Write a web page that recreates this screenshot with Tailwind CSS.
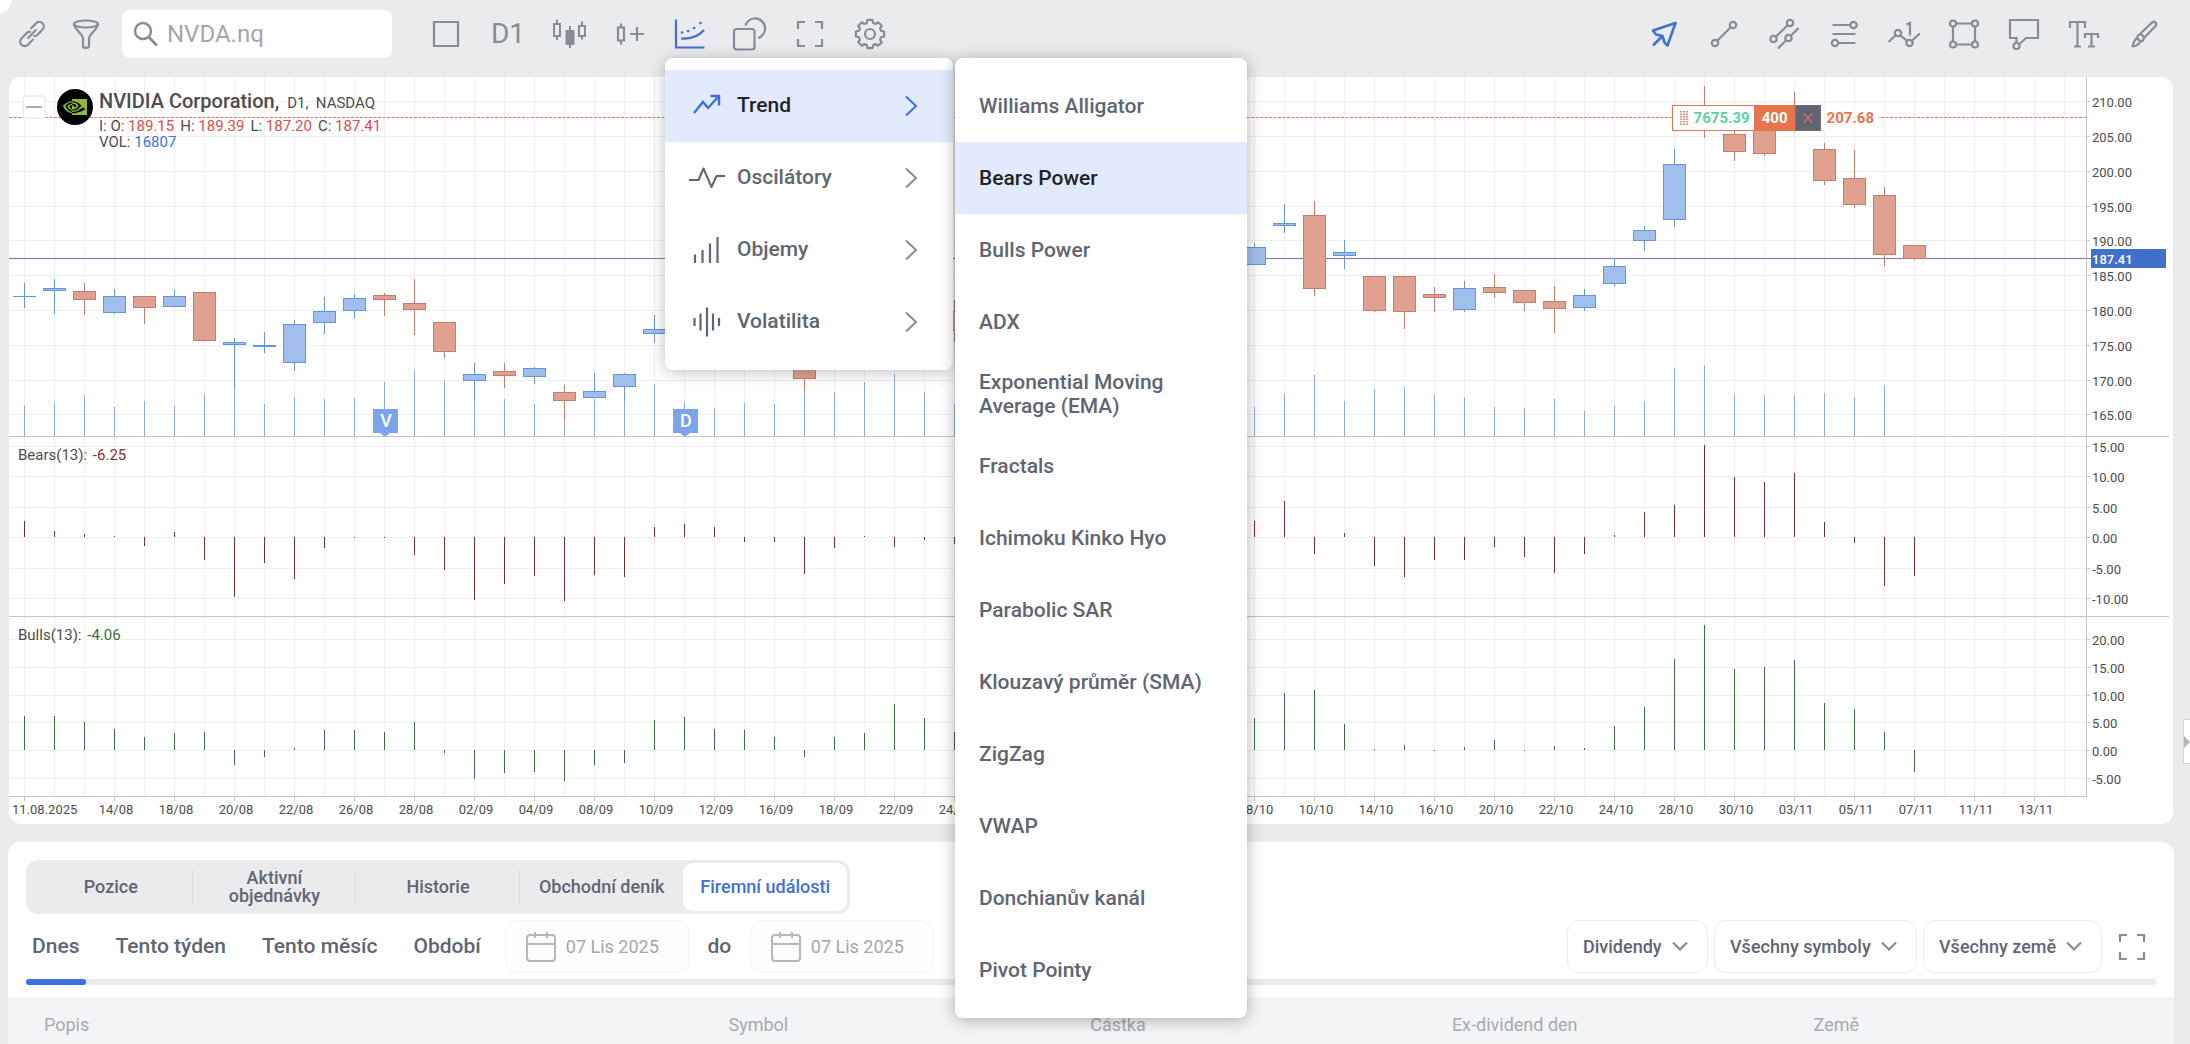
<!DOCTYPE html>
<html lang="cs">

<head>
  <meta charset="UTF-8" />
  <meta name="viewport" content="width=device-width, initial-scale=1.0" />
  <title>NVDA.nq - Obchodní platforma</title>
  <script src="https://cdn.jsdelivr.net/npm/@tailwindcss/browser@4"></script>
</head>

<body class="relative flex h-screen flex-col overflow-hidden bg-[#e9ebec] font-['Roboto',sans-serif] text-[#5f6673]">

  <div class="absolute -top-[16px] -left-[18px] size-[30px] rounded-full bg-white"></div>

  <!-- Horní lišta -->
  <header class="flex h-[77px] shrink-0 items-start justify-between pr-4 pl-[5px] text-[#868c98]">
    <div class="flex shrink-0">
      <button class="flex h-[68px] w-[54px] shrink-0 items-center justify-center" aria-label="Propojit">
        <svg class="size-9" viewBox="0 0 36 36" fill="none" stroke="currentColor" stroke-width="2.2" stroke-linecap="round">
          <g transform="rotate(-46 18 18)">
            <path d="M14.500 22.500H7.500a4.500 4.500 0 0 1 0-9h7.500a4.500 4.500 0 0 1 3 1.500M21.500 13.500h7a4.500 4.500 0 0 1 0 9h-7.500a4.500 4.500 0 0 1-3-1.500M12.500 18h11" />
          </g>
        </svg>
      </button>
      <button class="flex h-[68px] w-[54px] shrink-0 items-center justify-center" aria-label="Filtr">
        <svg class="size-9" viewBox="0 0 36 36" fill="none" stroke="currentColor" stroke-width="2.2" stroke-linejoin="round">
          <ellipse cx="18" cy="8" rx="12" ry="3.500" />
          <path d="M6 8c0 5 8 9 9 14v8.500c0 1.800 6 1.800 6 0V22c1-5 9-9 9-14" />
        </svg>
      </button>
      <label class="mt-[10px] ml-[9px] flex h-12 w-[270px] shrink-0 items-center gap-2 rounded-lg bg-white pl-[11px]">
        <svg class="size-[26px] shrink-0" viewBox="0 0 26 26" fill="none" stroke="currentColor" stroke-width="2.400">
          <circle cx="10" cy="10" r="8" />
          <path d="M15.500 16L24 24.500" stroke-width="2.800" />
        </svg>
        <input type="text" value="NVDA.nq" aria-label="Symbol" class="w-[200px] bg-transparent text-2xl text-[#a3a7b0] outline-none" />
      </label>

      <div class="ml-6 flex">
        <button class="flex h-[68px] w-[60px] shrink-0 items-center justify-center" aria-label="Rozložení">
          <svg class="size-9" viewBox="0 0 36 36" fill="none" stroke="currentColor" stroke-width="2.200">
            <path d="M6 6h24v24H6z" />
          </svg>
        </button>
        <button class="flex h-[68px] w-16 shrink-0 items-center justify-center text-[28px]">D1</button>
        <button class="flex h-[68px] w-[60px] shrink-0 items-center justify-center" aria-label="Typ grafu">
          <svg class="size-9" viewBox="0 0 36 36" fill="none" stroke="currentColor" stroke-width="2">
            <path d="M2 8h6v12H2zM5 3.500V8M5 20v4M27 10h6v10h-6zM30 5.500V10M30 20v3.500M18 10v22" />
            <path d="M14.500 15h7v13h-7z" fill="currentColor" stroke-linejoin="round" />
          </svg>
        </button>
        <button class="flex h-[68px] w-[60px] shrink-0 items-center justify-center" aria-label="Přidat svíčku">
          <svg class="size-9" viewBox="0 0 36 36" fill="none" stroke="currentColor" stroke-width="2.200">
            <path d="M6 11.500h6v13H6zM9 7.500v4M9 24.500v4M18 18h14M25 11v14" />
          </svg>
        </button>
        <div class="relative w-[60px] shrink-0">
          <button class="flex h-[68px] w-[60px] items-center justify-center text-[#3f70d9]" aria-label="Indikátory">
            <svg class="size-9" viewBox="0 0 36 36" fill="none" stroke="currentColor" stroke-width="2.200">
              <path d="M4 3.500V31.500H32.500" />
              <path d="M9 22.500C18 23 26 21 32 14" />
              <path d="M10 16.500h.1M16 15h.1M22 12h.1M28.500 7h.1" stroke-width="2.600" stroke-linecap="round" />
            </svg>
          </button>

          <!-- Kategorie indikátorů -->
          <div class="absolute top-[58px] left-[5px] z-10 w-[288px] rounded-lg bg-white py-3 text-[21px] font-medium text-[#5f6673] shadow-[0_2px_16px_rgba(0,0,0,0.25)]">
            <button class="flex h-[72px] w-full items-center gap-3 bg-[#e2ebfd] pr-[35px] pl-6 text-[#1f2329]">
              <svg class="size-9 text-[#3f70d9]" viewBox="0 0 36 36" fill="none" stroke="currentColor" stroke-width="2.400">
                <path d="M5 25l9-11 5 6 11-12M21.500 8H30v9.500" />
              </svg>
              <span class="flex-1 text-left">Trend</span>
              <svg class="h-[22px] w-[14px] text-[#3f70d9]" viewBox="0 0 14 22" fill="none" stroke="currentColor" stroke-width="2"><path d="M2 1.500L12 11 2 20.500" /></svg>
            </button>
            <button class="flex h-[72px] w-full items-center gap-3 pr-[35px] pl-6">
              <svg class="size-9" viewBox="0 0 36 36" fill="none" stroke="currentColor" stroke-width="2" stroke-linejoin="round">
                <path d="M0 20h9.500l5-11.500 8 18.500 5-11H36" />
              </svg>
              <span class="flex-1 text-left">Oscilátory</span>
              <svg class="h-[22px] w-[14px] text-[#868c98]" viewBox="0 0 14 22" fill="none" stroke="currentColor" stroke-width="2"><path d="M2 1.500L12 11 2 20.500" /></svg>
            </button>
            <button class="flex h-[72px] w-full items-center gap-3 pr-[35px] pl-6">
              <svg class="size-9" viewBox="0 0 36 36" fill="none" stroke="currentColor" stroke-width="2.200">
                <path d="M6 31v-8.500M13.500 31V18M21 31V11.500M28.500 31V5" />
              </svg>
              <span class="flex-1 text-left">Objemy</span>
              <svg class="h-[22px] w-[14px] text-[#868c98]" viewBox="0 0 14 22" fill="none" stroke="currentColor" stroke-width="2"><path d="M2 1.500L12 11 2 20.500" /></svg>
            </button>
            <button class="flex h-[72px] w-full items-center gap-3 pr-[35px] pl-6">
              <svg class="size-9" viewBox="0 0 36 36" fill="none" stroke="currentColor" stroke-width="2.200">
                <path d="M5.500 14v8M11.500 9.500v17M18 3.500v29M24 9.500v17M30 14v8" />
              </svg>
              <span class="flex-1 text-left">Volatilita</span>
              <svg class="h-[22px] w-[14px] text-[#868c98]" viewBox="0 0 14 22" fill="none" stroke="currentColor" stroke-width="2"><path d="M2 1.500L12 11 2 20.500" /></svg>
            </button>
          </div>

          <!-- Trendové indikátory -->
          <div class="absolute top-[58px] left-[295px] z-20 w-[292px] rounded-lg bg-white py-3 text-[21px] leading-6 font-medium text-[#5f6673] shadow-[0_2px_16px_rgba(0,0,0,0.3)]">
            <button class="block h-[72px] w-full px-6 text-left">Williams Alligator</button>
            <button class="block h-[72px] w-full bg-[#e2ebfd] px-6 text-left text-[#1f2329]">Bears Power</button>
            <button class="block h-[72px] w-full px-6 text-left">Bulls Power</button>
            <button class="block h-[72px] w-full px-6 text-left">ADX</button>
            <button class="block h-[72px] w-full px-6 text-left">Exponential Moving Average (EMA)</button>
            <button class="block h-[72px] w-full px-6 text-left">Fractals</button>
            <button class="block h-[72px] w-full px-6 text-left">Ichimoku Kinko Hyo</button>
            <button class="block h-[72px] w-full px-6 text-left">Parabolic SAR</button>
            <button class="block h-[72px] w-full px-6 text-left">Klouzavý průměr (SMA)</button>
            <button class="block h-[72px] w-full px-6 text-left">ZigZag</button>
            <button class="block h-[72px] w-full px-6 text-left">VWAP</button>
            <button class="block h-[72px] w-full px-6 text-left">Donchianův kanál</button>
            <button class="block h-[72px] w-full px-6 text-left">Pivot Pointy</button>
          </div>
        </div>
        <button class="flex h-[68px] w-[60px] shrink-0 items-center justify-center" aria-label="Šablony">
          <svg class="size-9" viewBox="0 0 36 36" fill="none" stroke="currentColor" stroke-width="2.200">
            <rect x="2" y="13" width="20.500" height="20.500" rx="2.500" />
            <path d="M13.500 9.500A10 10 0 1 1 26 22" />
          </svg>
        </button>
        <button class="flex h-[68px] w-[60px] shrink-0 items-center justify-center" aria-label="Celá obrazovka">
          <svg class="size-9" viewBox="0 0 36 36" fill="none" stroke="currentColor" stroke-width="2.200">
            <path d="M6 13V6h7M23 6h7v7M30 23v7h-7M13 30H6v-7" />
          </svg>
        </button>
        <button class="flex h-[68px] w-[60px] shrink-0 items-center justify-center" aria-label="Nastavení">
          <svg class="size-9" viewBox="-18 -18 36 36" fill="none" stroke="currentColor" stroke-width="2.200" stroke-linejoin="round">
            <path d="M-2.500-14.100H2.500L3.200-11.050 5.600-10.050 8.200-11.700 11.700-8.200 10.050-5.600 11.050-3.200 14.100-2.500V2.500L11.050 3.200 10.050 5.600 11.700 8.200 8.200 11.700 5.600 10.050 3.200 11.050 2.500 14.100H-2.500L-3.200 11.050-5.600 10.050-8.200 11.700-11.700 8.200-10.050 5.600-11.050 3.200-14.100 2.500V-2.500L-11.050-3.200-10.050-5.600-11.700-8.200-8.200-11.700-5.600-10.050-3.200-11.050z" />
            <circle r="5" />
          </svg>
        </button>
      </div>
    </div>

    <!-- Kreslicí nástroje -->
    <div class="flex shrink-0">
      <button class="flex h-[68px] w-[60px] items-center justify-center text-[#3f70d9]" aria-label="Kurzor">
        <svg class="size-9" viewBox="0 0 36 36" fill="none" stroke="currentColor" stroke-width="2.600" stroke-linejoin="round">
          <path d="M29.500 7L7 14.500l3 4 6.500 1.500 2 6.500 3 3zM17 19.500L7 29.500" />
        </svg>
      </button>
      <button class="flex h-[68px] w-[60px] items-center justify-center" aria-label="Úsečka">
        <svg class="size-9" viewBox="0 0 36 36" fill="none" stroke="currentColor" stroke-width="2.200">
          <circle cx="27" cy="9" r="3.200" /><circle cx="9" cy="27" r="3.200" /><path d="M24.700 11.300L11.300 24.700" />
        </svg>
      </button>
      <button class="flex h-[68px] w-[60px] items-center justify-center" aria-label="Kanál">
        <svg class="size-9" viewBox="0 0 36 36" fill="none" stroke="currentColor" stroke-width="2.200">
          <circle cx="24" cy="7" r="3.200" /><circle cx="7.500" cy="23" r="3.200" /><circle cx="22.500" cy="22" r="3.200" />
          <path d="M21.700 9.300L9.800 20.700M32.500 12L24.800 19.700M20.200 24.300L12 32.500" />
        </svg>
      </button>
      <button class="flex h-[68px] w-[60px] items-center justify-center" aria-label="Fibonacci">
        <svg class="size-9" viewBox="0 0 36 36" fill="none" stroke="currentColor" stroke-width="2.200">
          <circle cx="27.500" cy="9" r="3.200" /><circle cx="9" cy="27" r="3.200" />
          <path d="M6.500 9h17.800M6.500 18h23M12.200 27h17.300" />
        </svg>
      </button>
      <button class="flex h-[68px] w-[60px] items-center justify-center" aria-label="Vlny">
        <svg class="size-9" viewBox="0 0 36 36" fill="none" stroke="currentColor" stroke-width="2.200">
          <circle cx="12" cy="17" r="3.200" /><circle cx="23.500" cy="27" r="3.200" />
          <path d="M2.500 26l7.200-6.700M14.300 19.300l6.900 5.500M25.800 24.700l8-7.200M20.500 8.500l3.500-1.500v12.500" />
        </svg>
      </button>
      <button class="flex h-[68px] w-[60px] items-center justify-center" aria-label="Obdélník">
        <svg class="size-9" viewBox="0 0 36 36" fill="none" stroke="currentColor" stroke-width="2.200">
          <circle cx="7" cy="7.500" r="3" /><circle cx="29" cy="7.500" r="3" /><circle cx="7" cy="28.500" r="3" /><circle cx="29" cy="28.500" r="3" />
          <path d="M10 7.500h16M10 28.500h16M7 10.500v15M29 10.500v15" />
        </svg>
      </button>
      <button class="flex h-[68px] w-[60px] items-center justify-center" aria-label="Komentář">
        <svg class="size-9" viewBox="0 0 36 36" fill="none" stroke="currentColor" stroke-width="2.200">
          <path d="M10.500 27v-5H4V4h28v18H20l-6.500 6" /><circle cx="10.500" cy="30" r="3" />
        </svg>
      </button>
      <button class="flex h-[68px] w-[60px] items-center justify-center" aria-label="Text">
        <svg class="size-9" viewBox="0 0 36 36" fill="none" stroke="currentColor" stroke-width="2.200">
          <path d="M4 12V6h15v6M11.500 6v24M8 30.500h7M19 22v-4h13v4M25.500 18v12.500M22 30.500h7" />
        </svg>
      </button>
      <button class="flex h-[68px] w-[60px] items-center justify-center" aria-label="Štětec">
        <svg class="size-9" viewBox="0 0 36 36" fill="none" stroke="currentColor" stroke-width="2.200" stroke-linejoin="round">
          <path d="M14 18L26 6.500q2-1.500 3.500 0t0 3.500L18 22M14 18q3.500 1 4 4M14 18q-2.500 1-3 4l3.500 3.500q3-.5 3.500-3.500M11 22q-3 2-4.500 8.500Q12 30 14.500 25.500" />
        </svg>
      </button>
    </div>
  </header>

  <!-- Graf -->
  <main class="relative mr-[17px] ml-[9px] h-[747px] shrink-0 overflow-hidden rounded-xl bg-white">
    <svg id="chart" class="block h-full w-full text-[13px]"></svg>

    <button class="absolute top-[18px] left-[13px] flex h-6 w-6 items-center justify-center rounded-sm border-2 border-[#f0f0f1] bg-white" aria-label="Sbalit">
      <span class="h-[2px] w-4 bg-[#a9adb5]"></span>
    </button>
    <div class="absolute top-3 left-12 flex gap-[6px] text-[15px] leading-4 text-[#4d4d4d]">
      <svg class="size-9" viewBox="0 0 36 36">
        <circle cx="18" cy="18" r="18" />
        <path transform="translate(6 6)" fill="#8cb833" d="M8.948 8.798v-1.43a6.7 6.7 0 0 1 .424-.018c3.922-.124 6.493 3.374 6.493 3.374s-2.774 3.851-5.75 3.851c-.398 0-.787-.062-1.158-.185v-4.346c1.528.185 1.837.857 2.747 2.385l2.04-1.714s-1.492-1.952-4-1.952a6.016 6.016 0 0 0-.796.035m0-4.735v2.138l.424-.027c5.450-.185 9.010 4.470 9.010 4.470s-4.080 4.964-8.330 4.964c-.37 0-.733-.035-1.095-.097v1.325c.3.035.61.062.91.062 3.957 0 6.820-2.023 9.593-4.408.459.371 2.340 1.263 2.730 1.652-2.633 2.208-8.772 3.984-12.253 3.984-.335 0-.653-.018-.971-.053v1.864H24V4.063zm0 10.326v1.131c-3.657-.654-4.673-4.460-4.673-4.460s1.758-1.944 4.673-2.262v1.237H8.940c-1.528-.186-2.730 1.245-2.730 1.245s.68 2.412 2.739 3.110M2.456 10.900s2.164-3.197 6.500-3.533V6.201C4.153 6.590 0 10.653 0 10.653s2.350 6.802 8.948 7.420v-1.237c-4.840-.6-6.492-5.936-6.492-5.936z" />
      </svg>
      <div>
        <h1 class="flex h-[29px] items-baseline gap-2"><span class="text-xl leading-6 font-medium">NVIDIA Corporation,</span> <span>D1,&nbsp; NASDAQ</span></h1>
        <p class="flex gap-[6px]">
          <span>I: O: <span class="text-[#dc4c4c]">189.15</span></span>
          <span>H: <span class="text-[#dc4c4c]">189.39</span></span>
          <span>L: <span class="text-[#dc4c4c]">187.20</span></span>
          <span>C: <span class="text-[#dc4c4c]">187.41</span></span>
        </p>
        <p>VOL: <span class="text-[#3f70d9]">16807</span></p>
      </div>
    </div>
    <p class="absolute top-[370px] left-[9px] text-[15px] leading-4 text-[#4d4d4d]">Bears(13): <span class="ml-[2px] text-[#7d3030]">-6.25</span></p>
    <p class="absolute top-[550px] left-[9px] text-[15px] leading-4 text-[#4d4d4d]">Bulls(13): <span class="ml-[2px] text-[#3f6b40]">-4.06</span></p>

    <!-- Otevřená pozice -->
    <div class="absolute top-7 right-[293px] flex h-[26px] items-center text-[15px] font-bold">
      <div class="flex h-full items-center gap-[6px] border border-[#e8744d] bg-white pr-1 pl-[7px] text-[#5dcf9f]">
        <svg class="h-[14px] w-2" viewBox="0 0 8 14" stroke="#e8744d" stroke-width="1.600" stroke-dasharray="1.500 1"><path d="M1 0v14M4 0v14M7 0v14" /></svg>
        7675.39
      </div>
      <div class="flex h-full w-10 items-center justify-center bg-[#e8744d] text-white">400</div>
      <button class="flex h-full w-[26px] items-center justify-center border border-[#8a6a66] bg-[#5f6673]" aria-label="Zavřít pozici">
        <svg class="size-[10px]" viewBox="0 0 10 10" stroke="#e8744d" stroke-width="1.200"><path d="M0 0l10 10M10 0L0 10" /></svg>
      </button>
      <div class="flex h-full items-center bg-white/70 px-[6px] text-[#e8744d]">207.68</div>
    </div>
  </main>

  <button class="absolute top-[719px] right-0 flex h-[45px] w-[7px] items-center border border-r-0 border-[#d4d6d8] bg-white" aria-label="Panel">
    <svg class="h-3 w-[6px]" viewBox="0 0 6 12"><path d="M0 0l6 6-6 6z" fill="#b5b5b5" /></svg>
  </button>

  <!-- Spodní panel -->
  <section class="mt-[18px] mr-4 ml-2 min-h-0 flex-1 overflow-hidden rounded-t-xl bg-white">
    <div class="px-[18px] pt-[18px]">
      <nav class="grid h-[54px] w-[824px] grid-cols-5 rounded-xl bg-[#e9ebec] p-[3px] text-lg leading-[18px] font-medium">
        <button class="relative after:absolute after:top-[6px] after:right-0 after:h-9 after:w-px after:bg-[#dcdee1]">Pozice</button>
        <button class="relative px-6 after:absolute after:top-[6px] after:right-0 after:h-9 after:w-px after:bg-[#dcdee1]">Aktivní objednávky</button>
        <button class="relative after:absolute after:top-[6px] after:right-0 after:h-9 after:w-px after:bg-[#dcdee1]">Historie</button>
        <button>Obchodní deník</button>
        <button class="rounded-[10px] bg-white text-[#3f70d9]">Firemní události</button>
      </nav>

      <div class="mt-[6px] flex h-[53px] items-center justify-between text-[21px] font-medium">
        <div class="flex h-full items-center pl-[6px]">
          <button>Dnes</button>
          <button class="ml-9">Tento týden</button>
          <button class="ml-9">Tento měsíc</button>
          <button class="ml-9">Období</button>
          <label class="ml-6 flex h-full w-[184px] items-center gap-[9px] rounded-xl border border-[#f1f2f3] bg-[#fdfdfd] pl-[19px] text-[#b4b8bf]">
            <svg class="size-8 shrink-0" viewBox="0 0 32 32" fill="none" stroke="currentColor" stroke-width="2">
              <rect x="2" y="4" width="28" height="26" rx="3" /><path d="M2 13h28M10 1v6M22 1v6" />
            </svg>
            <input type="text" value="07 Lis 2025" aria-label="Od" class="w-[110px] bg-transparent text-lg font-normal text-[#a3a7b0] outline-none" />
          </label>
          <span class="w-[61px] text-center">do</span>
          <label class="flex h-full w-[184px] items-center gap-[9px] rounded-xl border border-[#f1f2f3] bg-[#fdfdfd] pl-[19px] text-[#b4b8bf]">
            <svg class="size-8 shrink-0" viewBox="0 0 32 32" fill="none" stroke="currentColor" stroke-width="2">
              <rect x="2" y="4" width="28" height="26" rx="3" /><path d="M2 13h28M10 1v6M22 1v6" />
            </svg>
            <input type="text" value="07 Lis 2025" aria-label="Do" class="w-[110px] bg-transparent text-lg font-normal text-[#a3a7b0] outline-none" />
          </label>
        </div>

        <div class="flex h-full items-center gap-[6px] text-lg">
          <div class="relative h-full">
            <select aria-label="Typ události" class="h-full w-[141px] appearance-none rounded-xl border border-[#e9ebec] pl-[15px]">
              <option>Dividendy</option>
            </select>
            <svg class="pointer-events-none absolute top-[21px] right-5 h-[10px] w-4" viewBox="0 0 16 10" fill="none" stroke="#868c98" stroke-width="2.200"><path d="M1 1.500l7 7 7-7" /></svg>
          </div>
          <div class="relative h-full">
            <select aria-label="Symboly" class="h-full w-[203px] appearance-none rounded-xl border border-[#e9ebec] pl-[15px]">
              <option>Všechny symboly</option>
            </select>
            <svg class="pointer-events-none absolute top-[21px] right-5 h-[10px] w-4" viewBox="0 0 16 10" fill="none" stroke="#868c98" stroke-width="2.200"><path d="M1 1.500l7 7 7-7" /></svg>
          </div>
          <div class="relative h-full">
            <select aria-label="Země" class="h-full w-[179px] appearance-none rounded-xl border border-[#e9ebec] pl-[15px]">
              <option>Všechny země</option>
            </select>
            <svg class="pointer-events-none absolute top-[21px] right-5 h-[10px] w-4" viewBox="0 0 16 10" fill="none" stroke="#868c98" stroke-width="2.200"><path d="M1 1.500l7 7 7-7" /></svg>
          </div>
          <button class="mr-[6px] ml-[6px]" aria-label="Zvětšit panel">
            <svg class="size-9" viewBox="0 0 36 36" fill="none" stroke="#868c98" stroke-width="2.200">
              <path d="M6 13V6h7M23 6h7v7M30 23v7h-7M13 30H6v-7" />
            </svg>
          </button>
        </div>
      </div>

      <div class="mt-[6px] h-[6px] rounded-full bg-[#e9ebec]">
        <div class="h-full w-[60px] rounded-full bg-[#3f70d9]"></div>
      </div>
    </div>

    <table class="mt-3 w-full table-fixed bg-[#f3f4f6] text-left text-lg text-[#a5aab3]">
      <thead>
        <tr class="h-14">
          <th class="w-[31.600%] pl-9 font-normal">Popis</th>
          <th class="w-[16.700%] pl-9 font-normal">Symbol</th>
          <th class="w-[16.700%] pl-9 font-normal">Částka</th>
          <th class="w-[16.700%] pl-9 font-normal">Ex-dividend den</th>
          <th class="pl-9 font-normal">Země</th>
        </tr>
      </thead>
    </table>
  </section>

  <script>
    const svg = document.getElementById('chart');
    const L = 9, T = 77; // levý horní roh grafu v okně

    // [index, high, tělo nahoře, tělo dole, low, směr]
    const candles = [
      [0, 283, 296, 297, 308, 1], [1, 279, 288, 291, 314, 1], [2, 283, 291, 300, 315, 0], [3, 289, 296, 313, 314, 1],
      [4, 296, 296, 308, 324, 0], [5, 290, 296, 307, 307, 1], [6, 292, 292, 341, 341, 0], [7, 338, 342, 345, 388, 1],
      [8, 332, 345, 347, 353, 1], [9, 320, 324, 363, 371, 1], [10, 297, 311, 323, 334, 1], [11, 294, 298, 311, 318, 1],
      [12, 293, 295, 300, 316, 0], [13, 279, 303, 310, 335, 0], [14, 322, 322, 352, 358, 0], [15, 363, 374, 381, 399, 1],
      [16, 363, 371, 376, 388, 0], [17, 367, 368, 377, 384, 1], [18, 385, 392, 401, 421, 0], [19, 373, 391, 398, 398, 1],
      [20, 373, 374, 387, 401, 1], [21, 315, 329, 334, 342, 1], [26, 350, 362, 379, 391, 0], [31, 300, 311, 331, 342, 0],
      [41, 243, 247, 265, 265, 1], [42, 204, 223, 226, 233, 1], [43, 201, 215, 289, 296, 0], [44, 240, 252, 256, 269, 1],
      [45, 276, 276, 311, 312, 0], [46, 276, 276, 312, 329, 0], [47, 287, 294, 298, 312, 0], [48, 281, 288, 310, 312, 1],
      [49, 274, 287, 293, 298, 0], [50, 290, 290, 303, 311, 0], [51, 286, 301, 309, 333, 0], [52, 289, 295, 308, 311, 1],
      [53, 258, 266, 284, 286, 1], [54, 226, 230, 241, 251, 1], [55, 149, 164, 220, 227, 1], [56, 86, 110, 125, 138, 0],
      [57, 125, 134, 152, 161, 0], [58, 118, 122, 154, 156, 0], [59, 92, 110, 128, 132, 0], [60, 143, 149, 181, 185, 0],
      [61, 150, 178, 205, 208, 0], [62, 187, 195, 255, 266, 0], [63, 245, 245, 259, 260, 0]
    ];

    // první úsek začíná indexem 0, druhý indexem 41
    const volume = [
      [405, 403, 395, 407, 401, 406, 394, 388, 404, 397, 399, 398, 382, 371, 380, 399, 399, 404, 400, 399, 401, 384, 402, 408, 403, 404, 391, 392, 382, 374, 392, 404],
      [407, 394, 375, 401, 389, 387, 395, 397, 407, 408, 399, 411, 406, 401, 368, 365, 395, 395, 395, 393, 397, 385]
    ];
    const bears = [
      [16, 6, 3, 1, -9, 5, -23, -60, -26, -42, -11, -1, -1, -18, -33, -63, -47, -39, -64, -38, -40, 10, 13, 10, -5, -5, -37, -11, 1, -10, -3, -7],
      [16, 36, -17, 4, -29, -40, -23, -23, -10, -20, -36, -17, 2, 25, 32, 92, 60, 55, 64, 15, -6, -49, -39]
    ];
    const bulls = [
      [34, 34, 28, 21, 13, 17, 18, -15, -7, 2, 20, 20, 18, 28, -3, -29, -23, -22, -31, -15, -13, 30, 33, 21, 20, 13, -7, 13, 17, 46, 32, 18],
      [32, 57, 60, 26, 1, 5, -1, 3, 10, -1, 4, 2, 24, 43, 91, 125, 81, 83, 90, 47, 41, 18, -22]
    ];
    const labels = [
      ['210.00', 101], ['205.00', 136], ['200.00', 171], ['195.00', 206], ['190.00', 240], ['185.00', 275], ['180.00', 310],
      ['175.00', 345], ['170.00', 380], ['165.00', 414], ['15.00', 446], ['10.00', 476], ['5.00', 507], ['0.00', 537],
      ['-5.00', 568], ['-10.00', 598], ['20.00', 639], ['15.00', 667], ['10.00', 695], ['5.00', 722], ['0.00', 750], ['-5.00', 778]
    ];
    const dates = ['14/08', '18/08', '20/08', '22/08', '26/08', '28/08', '02/09', '04/09', '08/09', '10/09', '12/09', '16/09',
      '18/09', '22/09', '24/09', '26/09', '30/09', '02/10', '06/10', '08/10', '10/10', '14/10', '16/10', '20/10', '22/10',
      '24/10', '28/10', '30/10', '03/11', '05/11', '07/11', '11/11', '13/11'];

    function draw() {
      const W = svg.clientWidth, H = svg.clientHeight;
      svg.setAttribute('viewBox', `${L} ${T} ${W} ${H}`);
      const right = L + W - 87; // cenová osa
      const step = Math.max(8, Math.round((right - L) / 69.2));
      const px = i => L + 15 + i * step;

      const out = [];
      const rect = (x, y, w, h, fill) => out.push(`<rect x="${x}" y="${y}" width="${w}" height="${h}" fill="${fill}"/>`);
      const text = (x, y, s, extra = '') => out.push(`<text x="${x}" y="${y}" fill="#4d4d4d" ${extra}>${s}</text>`);

      // mřížka
      for (let x = px(0); x < right; x += step) rect(x, T, 1, 719, '#efefef');
      labels.forEach(([s, y]) => {
        rect(L, y, right - L, 1, '#efefef');
        rect(right, y, 4, 1, '#c2c4c8');
        text(right + 6, y + 6, s);
      });

      // aktuální cena a cena pozice
      rect(L, 258, right - L + 5, 1, '#777da8');
      out.push(`<path d="M${L} 117.500H${right}" stroke="#e07a5f" stroke-dasharray="3 1.500"/>`);

      volume.forEach((part, p) => part.forEach((y, i) => rect(px(i + p * 41), y, 1, 436 - y, '#8caae0')));
      candles.forEach(([i, hi, top, bottom, lo, up]) => {
        const line = up ? '#6494de' : '#c67c6c';
        const x = px(i);
        rect(x, hi, 1, lo - hi, line);
        if (bottom - top < 2) rect(x - 11, top, 23, 1, line);
        else out.push(`<rect x="${x - 10.5}" y="${top + 0.5}" width="22" height="${bottom - top - 1}" fill="${up ? '#a1bfec' : '#e1a191'}" stroke="${line}"/>`);
      });
      const bars = (data, base, color) => data.forEach((part, p) => part.forEach((v, i) =>
        rect(px(i + p * 41), v > 0 ? base - v : base, 1, Math.abs(v), color)));
      bars(bears, 537, '#7d2d2d');
      bars(bulls, 750, '#3f6b40');

      // události V a D
      [['V', 12], ['D', 22]].forEach(([s, i]) => {
        const x = px(i);
        out.push(`<path d="M${x - 11} 409h25v24h-8l-5 4-5-4h-7z" fill="#7ba4ea"/>`);
        out.push(`<text x="${x + 2}" y="427" fill="#fff" font-size="18" font-weight="500" text-anchor="middle">${s}</text>`);
      });

      // osy
      rect(L, 436, W - 4, 1, '#c2c4c8');
      rect(L, 616, W - 4, 1, '#c2c4c8');
      rect(L, 796, right - L, 1, '#c2c4c8');
      rect(right, T, 1, 720, '#c2c4c8');
      rect(px(0), 796, 1, 5, '#c2c4c8');
      text(12, 814, '11.08.2025');
      dates.forEach((d, k) => {
        const x = px(3 + k * 2);
        rect(x, 796, 1, 5, '#c2c4c8');
        text(x + 2, 814, d, 'text-anchor="middle"');
      });
      rect(right + 5, 249, 75, 19, '#4070c8');
      out.push(`<text x="${right + 6}" y="264" fill="#fff" font-weight="500">187.41</text>`);

      svg.innerHTML = out.join('');
    }

    new ResizeObserver(draw).observe(svg);
  </script>

</body>

</html>
